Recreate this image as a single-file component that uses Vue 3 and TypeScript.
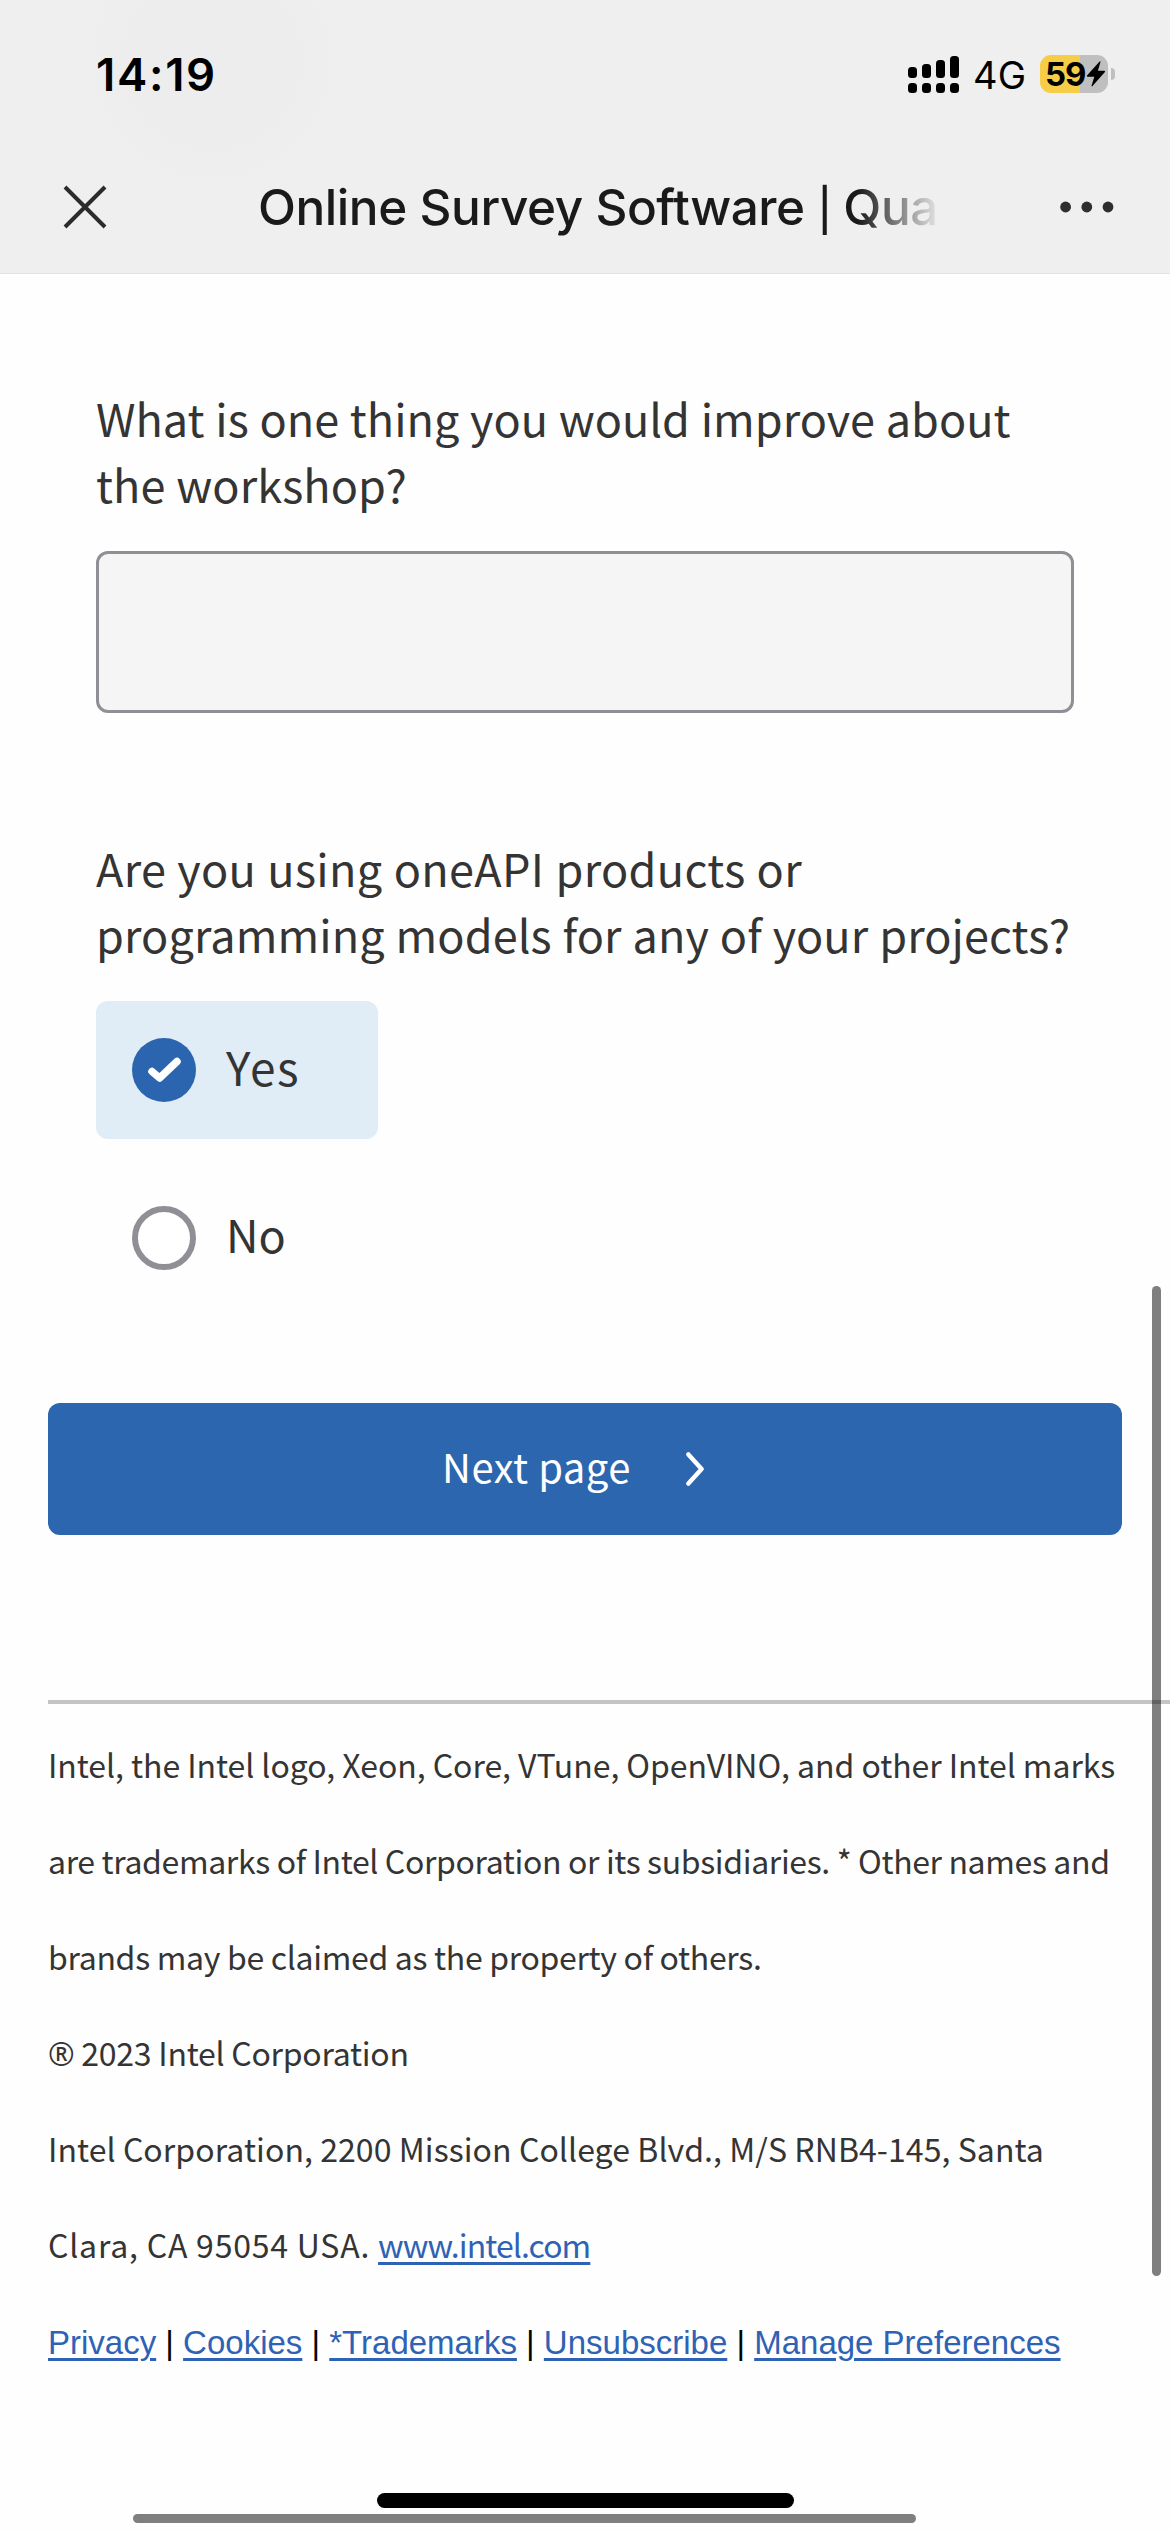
<script setup lang="ts">
import { ref } from 'vue'

interface FooterLine {
  text: string
  spacing: number
}

const answer = ref('')
const selected = ref('Yes')
const choices = ['Yes', 'No']

const signalHeights = [11, 14, 18, 22]

const legalLines: FooterLine[] = [
  { text: 'Intel, the Intel logo, Xeon, Core, VTune, OpenVINO, and other Intel marks', spacing: -0.05 },
  { text: 'are trademarks of Intel Corporation or its subsidiaries. * Other names and', spacing: -0.36 },
  { text: 'brands may be claimed as the property of others.', spacing: -0.31 },
]

const links = ['Privacy', 'Cookies', '*Trademarks', 'Unsubscribe', 'Manage Preferences']
</script>

<template>
  <div class="screen">
    <header class="top">
      <div class="status">
        <span class="time">14:19</span>
        <div class="indicators">
          <div class="signal">
            <div v-for="h in signalHeights" :key="h" class="signal-col">
              <i class="bar" :style="{ height: h + 'px' }"></i>
              <i class="dot"></i>
            </div>
          </div>
          <span class="network">4G</span>
          <div class="battery">
            <span class="level">59</span>
            <svg class="bolt" width="20" height="26" viewBox="0 0 20 26">
              <path d="M13.6 0.6 L1 14.4 a.8 .8 0 0 0 .6 1.3 H8.3 L5.6 24.6 a.5 .5 0 0 0 .9 .5 L18.9 11 a.8 .8 0 0 0 -.6 -1.3 H11.9 L14.5 1.1 a.5 .5 0 0 0 -.9 -.5z" fill="#000" />
            </svg>
          </div>
          <i class="nub"></i>
        </div>
      </div>
      <div class="nav">
        <svg class="close" width="44" height="44" viewBox="0 0 44 44">
          <path d="M2 2 L42 42 M42 2 L2 42" stroke="#2b2b2b" stroke-width="4" fill="none" />
        </svg>
        <div class="title">Online Survey Software <span class="pipe">|</span> Qua</div>
        <svg class="more" width="54" height="12" viewBox="0 0 54 12">
          <circle cx="5.6" cy="6" r="5.4" fill="#2e2e2e" />
          <circle cx="26.8" cy="6" r="5.4" fill="#2e2e2e" />
          <circle cx="48" cy="6" r="5.4" fill="#2e2e2e" />
        </svg>
      </div>
    </header>

    <main class="page">
      <section class="question">
        <p class="prompt"><span class="tight">What is one thing you would improve about</span><br />the workshop?</p>
        <input v-model="answer" class="field" type="text" />
      </section>

      <section class="question second">
        <p class="prompt"><span class="loose">Are you using oneAPI products or</span><br />programming models for any of your projects?</p>
        <div class="choices">
          <div
            v-for="c in choices"
            :key="c"
            class="choice"
            :class="{ on: c === selected }"
            @click="selected = c"
          >
            <svg width="64" height="64" viewBox="0 0 64 64">
              <template v-if="c === selected">
                <circle cx="32" cy="32" r="32" fill="#2b65af" />
                <path d="M20 33.5 L27.6 40 L45 23.5" fill="none" stroke="#fff" stroke-width="7.5" stroke-linecap="round" stroke-linejoin="round" />
              </template>
              <circle v-else cx="32" cy="32" r="29" fill="#fff" stroke="#8f8f96" stroke-width="6" />
            </svg>
            <span class="choice-label">{{ c }}</span>
          </div>
        </div>
      </section>

      <button class="next" type="button">
        <span class="next-label">Next page</span>
        <svg width="18" height="34" viewBox="0 0 18 34">
          <path d="M2.4 2.4 L15.6 17 L2.4 31.6" fill="none" stroke="#fff" stroke-width="4.4" stroke-linecap="round" stroke-linejoin="round" />
        </svg>
      </button>

      <footer class="footer">
        <div class="rule"></div>
        <p v-for="l in legalLines" :key="l.text" :style="{ letterSpacing: l.spacing + 'px' }">{{ l.text }}</p>
        <p class="copyright"><span class="reg">®</span> 2023 Intel Corporation</p>
        <p class="address">Intel Corporation, 2200 Mission College Blvd., M/S RNB4-145, Santa</p>
        <p><span class="city">Clara, CA 95054 USA. </span><a class="site">www.intel.com</a></p>
        <p class="links">
          <template v-for="(l, i) in links" :key="l"><span v-if="i > 0"> | </span><a>{{ l }}</a></template>
        </p>
      </footer>
    </main>

    <div class="scroll-y"></div>
    <div class="scroll-x"></div>
    <div class="home"></div>
  </div>
</template>

<style>
html,
body {
  margin: 0;
  background: #fefefe;
}
</style>

<style scoped>
.screen {
  position: relative;
  width: 1170px;
  height: 2532px;
  overflow: hidden;
  background: #fefefe;
  color: #343434;
  font-family: "Noto Sans CJK SC", "Noto Sans", sans-serif;
}
.top {
  box-sizing: border-box;
  height: 274px;
  border-bottom: 1px solid #e2e2e2;
  background:
    radial-gradient(circle at 212px 60px, #ededed 0, #ededed 90px, transparent 125px),
    #efefef;
  font-family: Inter, sans-serif;
}
.status {
  display: flex;
  align-items: center;
  justify-content: space-between;
  height: 148px;
  padding: 0 55px 0 96px;
}
.time {
  color: #000;
  font-size: 45.5px;
  font-weight: 600;
  letter-spacing: 1.7px;
}
.indicators {
  display: flex;
  align-items: center;
}
.signal {
  display: flex;
  align-items: flex-end;
  gap: 5px;
  height: 37px;
}
.signal-col {
  display: flex;
  flex-direction: column;
  gap: 5px;
}
.signal-col i {
  display: block;
  width: 9px;
  border-radius: 3.5px;
  background: #000;
}
.signal-col .dot {
  height: 10px;
}
.network {
  margin: 2px 0 0 14px;
  color: #000;
  font-size: 38px;
  line-height: 46px;
}
.battery {
  display: flex;
  align-items: center;
  width: 68px;
  height: 38px;
  margin-left: 14px;
  border-radius: 11px;
  background: linear-gradient(90deg, #f6cd46 0 40px, #bfbfbf 40px);
}
.level {
  margin-left: 5px;
  color: #000;
  font-size: 33px;
  font-weight: 700;
  line-height: 38px;
  letter-spacing: -1px;
}
.bolt {
  flex: none;
}
.nub {
  width: 4px;
  height: 12px;
  margin-left: 3px;
  border-radius: 0 6px 6px 0;
  background: #bfbfbf;
}
.nav {
  display: flex;
  align-items: center;
  height: 118px;
  padding: 0 56px 0 63px;
}
.close {
  flex: none;
}
.title {
  width: 700px;
  margin-left: 151px;
  color: #1a1a1a;
  font-size: 49.5px;
  font-weight: 500;
  line-height: 70px;
  letter-spacing: -0.45px;
  white-space: nowrap;
  -webkit-mask-image: linear-gradient(90deg, #000 0 600px, transparent 684px);
  mask-image: linear-gradient(90deg, #000 0 600px, transparent 684px);
}
.pipe {
  margin: 0 -1px 0 0;
  font-size: 42px;
  line-height: 1;
}
.more {
  flex: none;
  margin-left: auto;
}
.page {
  padding: 111px 0 0 48px;
}
.question {
  width: 978px;
  margin-left: 48px;
}
.second {
  margin-top: 122px;
}
.prompt {
  margin: 0 0 34px;
  font-size: 45px;
  line-height: 66px;
  letter-spacing: 0.1px;
  word-spacing: 0.6px;
  white-space: nowrap;
}
.tight {
  letter-spacing: 0.02px;
}
.loose {
  letter-spacing: 0.35px;
}
.field {
  display: block;
  box-sizing: border-box;
  width: 978px;
  height: 162px;
  padding: 0 24px;
  border: 3px solid #8f8f96;
  border-radius: 12px;
  background: #f5f5f6;
  font: inherit;
  font-size: 45px;
}
.choices {
  display: flex;
  flex-direction: column;
  align-items: flex-start;
  gap: 30px;
}
.choice {
  display: flex;
  align-items: center;
  box-sizing: border-box;
  width: 282px;
  height: 138px;
  padding-left: 36px;
  border-radius: 12px;
}
.choice.on {
  background: #e0ecf6;
}
.choice-label {
  margin-left: 30px;
  padding-bottom: 9px;
  font-size: 45px;
  line-height: 66px;
}
.on .choice-label {
  font-size: 46px;
  letter-spacing: 1.6px;
}
.next {
  display: flex;
  align-items: center;
  justify-content: center;
  box-sizing: border-box;
  width: 1074px;
  height: 132px;
  margin-top: 96px;
  padding: 0 24px 0 0;
  border: 0;
  border-radius: 12px;
  background: #2b66ae;
  color: #fff;
  font-family: inherit;
}
.next-label {
  margin-right: 55px;
  padding-bottom: 6px;
  font-size: 40px;
  line-height: 56px;
  letter-spacing: 0.5px;
}
.footer {
  margin-top: 165px;
}
.rule {
  height: 4px;
  margin-bottom: 12px;
  background: #c4c4c4;
}
.footer p {
  height: 96px;
  margin: 0;
  font-size: 32px;
  line-height: 96px;
  white-space: nowrap;
}
.footer a {
  color: #2e62b5;
  text-decoration: underline;
  text-decoration-thickness: 2.5px;
  text-underline-offset: 4px;
}
.reg {
  font-family: "Open Sans", sans-serif;
}
.footer .copyright {
  letter-spacing: -0.25px;
}
.footer .address {
  letter-spacing: 0.07px;
}
.city {
  letter-spacing: 0.79px;
}
.footer .site {
  letter-spacing: -0.92px;
}
.links a,
.links span {
  font-family: "Liberation Sans", sans-serif;
  font-size: 33px;
}
.links span {
  color: #000;
  white-space: pre;
}
.scroll-y {
  position: absolute;
  top: 1286px;
  left: 1152px;
  width: 9px;
  height: 990px;
  border-radius: 5px;
  background: rgba(0, 0, 0, 0.5);
}
.scroll-x {
  position: absolute;
  top: 2514px;
  left: 133px;
  width: 783px;
  height: 9px;
  border-radius: 5px;
  background: rgba(0, 0, 0, 0.5);
}
.home {
  position: absolute;
  top: 2493px;
  left: 377px;
  width: 417px;
  height: 15px;
  border-radius: 8px;
  background: #000;
}
</style>
